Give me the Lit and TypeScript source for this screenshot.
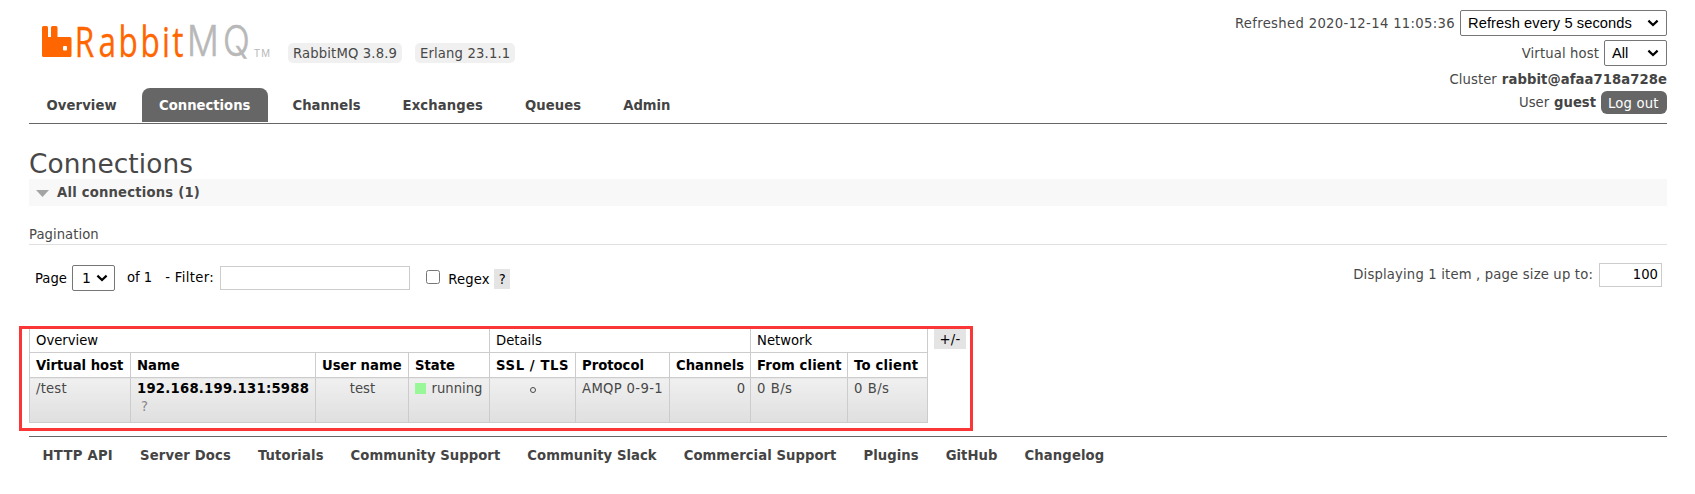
import { LitElement, html, css, svg } from "lit";
import { customElement } from "lit/decorators.js";

const TABS = ["Overview", "Connections", "Channels", "Exchanges", "Queues", "Admin"];
const LINKS = ["HTTP API", "Server Docs", "Tutorials", "Community Support", "Community Slack",
  "Commercial Support", "Plugins", "GitHub", "Changelog"];
const HEADS = ["Virtual host", "Name", "User name", "State", "SSL / TLS", "Protocol", "Channels", "From client", "To client"];

const chevron = svg`<svg class="chevron" width="12" height="8" viewBox="0 0 12 8"><path d="M1.4 1.6 L6 6 L10.6 1.6" fill="none" stroke="#000" stroke-width="2.2"/></svg>`;

@customElement("app-root")
export class AppRoot extends LitElement {
  static styles = css`
    :host { display: block; box-sizing: border-box; height: 494px; padding: 0 28px 0 29px; overflow: hidden;
      background: #fff; color: #484848; font: 13.2px/18px "DejaVu Sans", Verdana, sans-serif; white-space: nowrap; }
    * { box-sizing: border-box; }
    b { color: #444; }
    .header { display: flex; justify-content: space-between; height: 124px; border-bottom: 1px solid #666; }
    .left { display: flex; flex-direction: column; justify-content: space-between; }
    .brand { display: flex; padding-left: 13px; }
    .logo { display: block; width: 246px; height: 80px; overflow: visible; }
    .versions { display: flex; gap: 13px; height: 64px; padding-top: 43px; letter-spacing: 0.15px; }
    .version { height: 20px; padding: 2px 5px 0; border-radius: 5px; background: #f0f0f0; }
    .version:first-child { width: 114px; }
    .version:last-child { width: 100px; }
    .tabs { display: flex; gap: 7px; padding-bottom: 1px; }
    .tab { height: 34px; padding: 9px 17.5px 0; border-radius: 8px 8px 0 0; font-weight: bold; color: #444; }
    .tab:nth-child(1) { width: 106px; letter-spacing: 0.1px; }
    .tab:nth-child(2) { width: 126px; padding: 9px 0 0 17px; }
    .tab:nth-child(4) { letter-spacing: 0.13px; }
    .tab:nth-child(5) { letter-spacing: 0.08px; }
    .tab.selected { background: #666; color: #fff; }
    .status { display: flex; flex-direction: column; align-items: flex-end; padding-top: 10px; }
    .line { display: flex; align-items: center; gap: 5px; }
    .line.sel { height: 26px; margin-bottom: 4px; }
    .line.cluster { height: 18px; margin-top: 1px; letter-spacing: 0.08px; }
    .line.user { height: 23px; margin-top: 2px; }
    .refreshed { letter-spacing: 0.33px; padding-top: 1px; }
    .vlabel { letter-spacing: 0.13px; padding-top: 1px; }
    .select { display: flex; align-items: center; justify-content: space-between; height: 26px; padding: 0 7px 0 8px;
      border: 1px solid #767676; border-radius: 2px; background: #fff; color: #000;
      font: 14.67px "Liberation Sans", Arial, sans-serif; }
    .select.refresh { width: 207px; padding-left: 7px; letter-spacing: 0.08px; }
    .select.vhost { width: 63px; padding-left: 7px; }
    .select.page { width: 43px; margin: 0 12px 0 5px; padding: 0 6px 0 9px; font-family: "DejaVu Sans", sans-serif; font-size: 14px; }
    .logout { width: 66px; height: 23px; padding: 4px 0 0 7px; border-radius: 6px; background: #666; color: #fff; letter-spacing: 0.2px; }
    h1 { height: 55px; margin: 0; padding-top: 22px; font-size: 26.4px; font-weight: normal; line-height: 36px; letter-spacing: 0.1px; }
    .section { display: flex; align-items: center; height: 27px; padding-left: 7px; background: #f8f8f8; font-weight: bold; letter-spacing: 0.2px; }
    .arrow { width: 13px; height: 7px; margin: 1px 8px 0 0; }
    .pagination { height: 39px; padding-top: 20px; border-bottom: 1px solid #e0e0e0; letter-spacing: 0.05px; }
    .controls { display: flex; justify-content: space-between; height: 82px; padding: 20px 5px 0 6px; }
    .pager { display: flex; align-items: center; height: 26px; color: #000; }
    .pagelabel { padding-top: 1px; }
    .filterlabel { width: 49px; margin-left: 13px; letter-spacing: 0.33px; }
    .filter { width: 190px; height: 24px; margin: 0 16px 0 6px; border: 1px solid #ccc; }
    .check { width: 14px; height: 14px; margin: -2px 8px 0 0; border: 1px solid #767676; border-radius: 2.5px; }
    .regex { width: 41.5px; padding-top: 4px; letter-spacing: 0.15px; }
    .help { width: 16px; height: 20px; margin: 2px 0 0 4.5px; background: #e4e4e4; text-align: center; line-height: 21px; }
    .sizes { display: flex; align-items: center; height: 24px; margin-top: -2px; letter-spacing: 0.17px; }
    .size { width: 63px; height: 24px; margin-left: 6px; padding: 2px 3px 0; border: 1px solid #ccc; color: #000; text-align: right; letter-spacing: 0; }
    .list { display: flex; position: relative; height: 109px; }
    .highlight { position: absolute; left: -10px; top: -1px; width: 954px; height: 105px; border: 3px solid #fb3636; }
    table { width: 899px; height: 96px; table-layout: fixed; border-collapse: collapse; }
    th, td { height: 25px; padding: 0 5px 0 6px; border: 1px solid #ccc; text-align: left; }
    th { padding-top: 2px; color: #000; }
    th.group { font-weight: normal; }
    th.h4 { letter-spacing: 0.6px; }
    th.h7 { letter-spacing: 0.1px; }
    th.h8 { letter-spacing: 0.2px; }
    td { height: 45px; padding-top: 2px; vertical-align: top; background: linear-gradient(#f0f0f0, #dfdfdf); }
    td.vh { letter-spacing: 0.2px; }
    td.proto { letter-spacing: 0.33px; }
    td.rate { letter-spacing: 0.5px; }
    .ip { color: #000; letter-spacing: 0.25px; }
    .sub { padding-left: 4px; color: #888; }
    td.center { text-align: center; }
    td.right { text-align: right; }
    .dot { display: inline-block; width: 11px; height: 11px; margin-right: 5.5px; background: #98f898; vertical-align: -1px; }
    .ring { display: inline-block; width: 6px; height: 6px; border: 1px solid #484848; border-radius: 50%; }
    .c1 { width: 101px; } .c2 { width: 185px; } .c3 { width: 93px; } .c4 { width: 81px; } .c5 { width: 86px; }
    .c6 { width: 94px; } .c7 { width: 81px; } .c8 { width: 97px; } .c9 { width: 80px; }
    .toggle { width: 32px; height: 22px; margin-left: 6px; background: #e4e4e4; color: #000; text-align: center; line-height: 25px; letter-spacing: 0.3px; }
    .footer { display: flex; gap: 27px; padding: 10px 0 0 13.5px; border-top: 1px solid #666; font-weight: bold; color: #444; letter-spacing: 0.06px; }
    .footer span:nth-child(1) { letter-spacing: 0.27px; }
    .footer span:nth-child(2) { letter-spacing: 0.15px; }
    .footer span:nth-child(3), .footer span:nth-child(9) { letter-spacing: 0.12px; }
  `;

  render() {
    return html`
      <div class="header">
        <div class="left">
          <div class="brand">
            <svg class="logo" viewBox="42 0 246 80">
              <path fill="#f60" fill-rule="evenodd" d="M43.5 26H46.5Q48 26 48 27.5V37H51V27.5Q51 26 52.5 26H56Q57.5 26 57.5 27.5V37H70Q71.5 37 71.5 38.5V55.5Q71.5 57 70 57H43.5Q42 57 42 55.5V27.5Q42 26 43.5 26ZM64 46Q63 46 63 47V49.5Q63 50.5 64 50.5H66Q67 50.5 67 49.5V47Q67 46 66 46Z"/>
              <text transform="scale(.76 1)" x="98.500 129.500 156 185 213 226.500" y="56.700" font-family="Open Sans" font-size="41.500" fill="#f60" stroke="#f60" stroke-width=".3">Rabbit</text>
              <text transform="scale(.84 1)" x="222.500 265.500" y="56.500" font-family="Inter" font-weight="300" font-size="42" fill="#b8b8b8" stroke="#b8b8b8" stroke-width=".6">MQ</text>
              <text x="253.800" y="56.500" font-family="Liberation Sans" font-size="10.500" letter-spacing="1" fill="#b8b8b8">TM</text>
            </svg>
            <div class="versions"><span class="version">RabbitMQ 3.8.9</span><span class="version">Erlang 23.1.1</span></div>
          </div>
          <nav class="tabs">${TABS.map(t => html`<span class="tab ${t === "Connections" ? "selected" : ""}">${t}</span>`)}</nav>
        </div>
        <div class="status">
          <div class="line sel"><span class="refreshed">Refreshed 2020-12-14 11:05:36</span><span class="select refresh"><span>Refresh every 5 seconds</span>${chevron}</span></div>
          <div class="line sel"><span class="vlabel">Virtual host</span><span class="select vhost"><span>All</span>${chevron}</span></div>
          <div class="line cluster"><span>Cluster</span><b>rabbit@afaa718a728e</b></div>
          <div class="line user"><span>User</span><b>guest</b><span class="logout">Log out</span></div>
        </div>
      </div>
      <h1>Connections</h1>
      <div class="section"><svg class="arrow" viewBox="0 0 13 7"><path d="M0 0h13L6.500 7z" fill="#a4a4a4"/></svg><span>All connections (1)</span></div>
      <div class="pagination">Pagination</div>
      <div class="controls">
        <div class="pager"><span class="pagelabel">Page</span><span class="select page"><span>1</span>${chevron}</span><span>of 1</span><span class="filterlabel">- Filter:</span><span class="filter"></span><span class="check"></span><span class="regex">Regex</span><span class="help">?</span></div>
        <div class="sizes"><span>Displaying 1 item , page size up to:</span><span class="size">100</span></div>
      </div>
      <div class="list">
        <table>
          <colgroup><col class="c1"><col class="c2"><col class="c3"><col class="c4"><col class="c5"><col class="c6"><col class="c7"><col class="c8"><col class="c9"></colgroup>
          <tr><th class="group" colspan="4">Overview</th><th class="group" colspan="3">Details</th><th class="group" colspan="2">Network</th></tr>
          <tr>${HEADS.map((h, i) => html`<th class="h${i}">${h}</th>`)}</tr>
          <tr><td class="vh">/test</td><td><b class="ip">192.168.199.131:5988</b><div class="sub">?</div></td><td class="center">test</td><td><span class="dot"></span>running</td><td class="center"><span class="ring"></span></td><td class="proto">AMQP 0-9-1</td><td class="right">0</td><td class="rate">0 B/s</td><td class="rate">0 B/s</td></tr>
        </table>
        <span class="toggle">+/-</span>
        <div class="highlight"></div>
      </div>
      <div class="footer">${LINKS.map(l => html`<span>${l}</span>`)}</div>
    `;
  }
}
